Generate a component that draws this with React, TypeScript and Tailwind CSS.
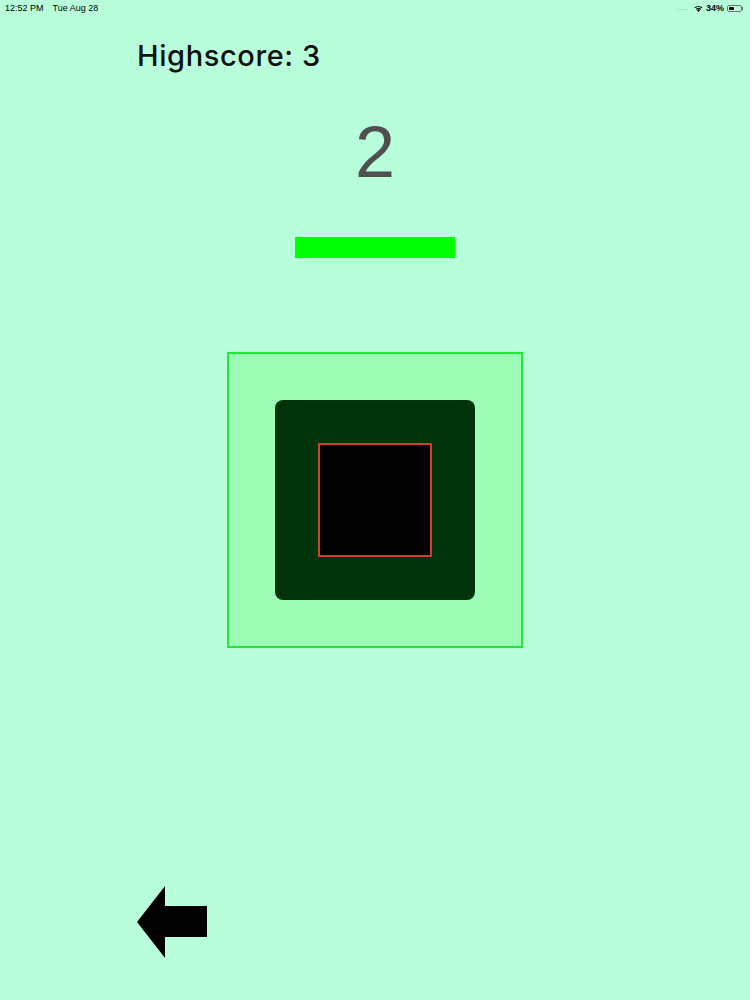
import React from 'react';

function StatusBar() {
    return (
        <div className="h-[17px] px-[5px] flex items-center justify-between text-[9px] text-black">
            <div className="flex items-center gap-[9px]">
                <span>12:52 PM</span>
                <span>Tue Aug 28</span>
            </div>
            <div className="flex items-center gap-[3px] pr-[2px]">
                <span className="text-[7px] text-gray-500 tracking-[1px] mr-[2px]">....</span>
                <svg width="9" height="7" viewBox="0 0 12 9">
                    <path d="M6 9 L3.8 6.6 A3.2 3.2 0 0 1 8.2 6.6 Z" fill="#000" />
                    <path d="M2.4 5.2 A5.2 5.2 0 0 1 9.6 5.2 L8.7 6.1 A3.9 3.9 0 0 0 3.3 6.1 Z" fill="#000" />
                    <path d="M0.6 3.3 A7.8 7.8 0 0 1 11.4 3.3 L10.4 4.3 A6.4 6.4 0 0 0 1.6 4.3 Z" fill="#000" />
                </svg>
                <span className="font-bold">34%</span>
                <div className="flex items-center">
                    <div className="w-[15px] h-[7px] rounded-[2px] border border-gray-500 p-[1px]">
                        <div className="h-full w-[5px] bg-black rounded-[1px]" />
                    </div>
                    <div className="w-[1px] h-[3px] bg-gray-500" />
                </div>
            </div>
        </div>
    );
}

export default function App() {
    return (
        <div className="w-[750px] min-h-[1000px] bg-[#b9fedb] flex flex-col font-['Liberation_Sans',Arial,sans-serif]">
            <StatusBar />

            <div className="mt-[24px] pl-[137px] font-['Inter',sans-serif] text-[29px] leading-[29px] font-medium tracking-[0.6px] text-[#111]">
                Highscore: 3
            </div>

            <div className="mt-[46px] text-center text-[72px] leading-[72px] text-[#4f4f4f]">
                2
            </div>

            <div className="mt-[49px] flex justify-center">
                <div className="w-[160px] h-[21px] bg-[#00ff00]" />
            </div>

            <div className="mt-[94px] flex justify-center">
                <div className="w-[296px] h-[296px] border-2 border-[#22e63c] bg-[#9dfcb5] flex items-center justify-center">
                    <div className="w-[200px] h-[200px] rounded-[8px] bg-[#02330b] flex items-center justify-center">
                        <div className="w-[114px] h-[114px] border-2 border-[#d0402a] bg-black" />
                    </div>
                </div>
            </div>

            <div className="mt-[238px] pl-[137px]">
                <svg width="71" height="73" viewBox="0 0 71 73">
                    <path d="M0 36 L28 0 L28 20 L70 20 L70 51 L28 51 L28 72 Z" fill="#000" />
                </svg>
            </div>
        </div>
    );
}
